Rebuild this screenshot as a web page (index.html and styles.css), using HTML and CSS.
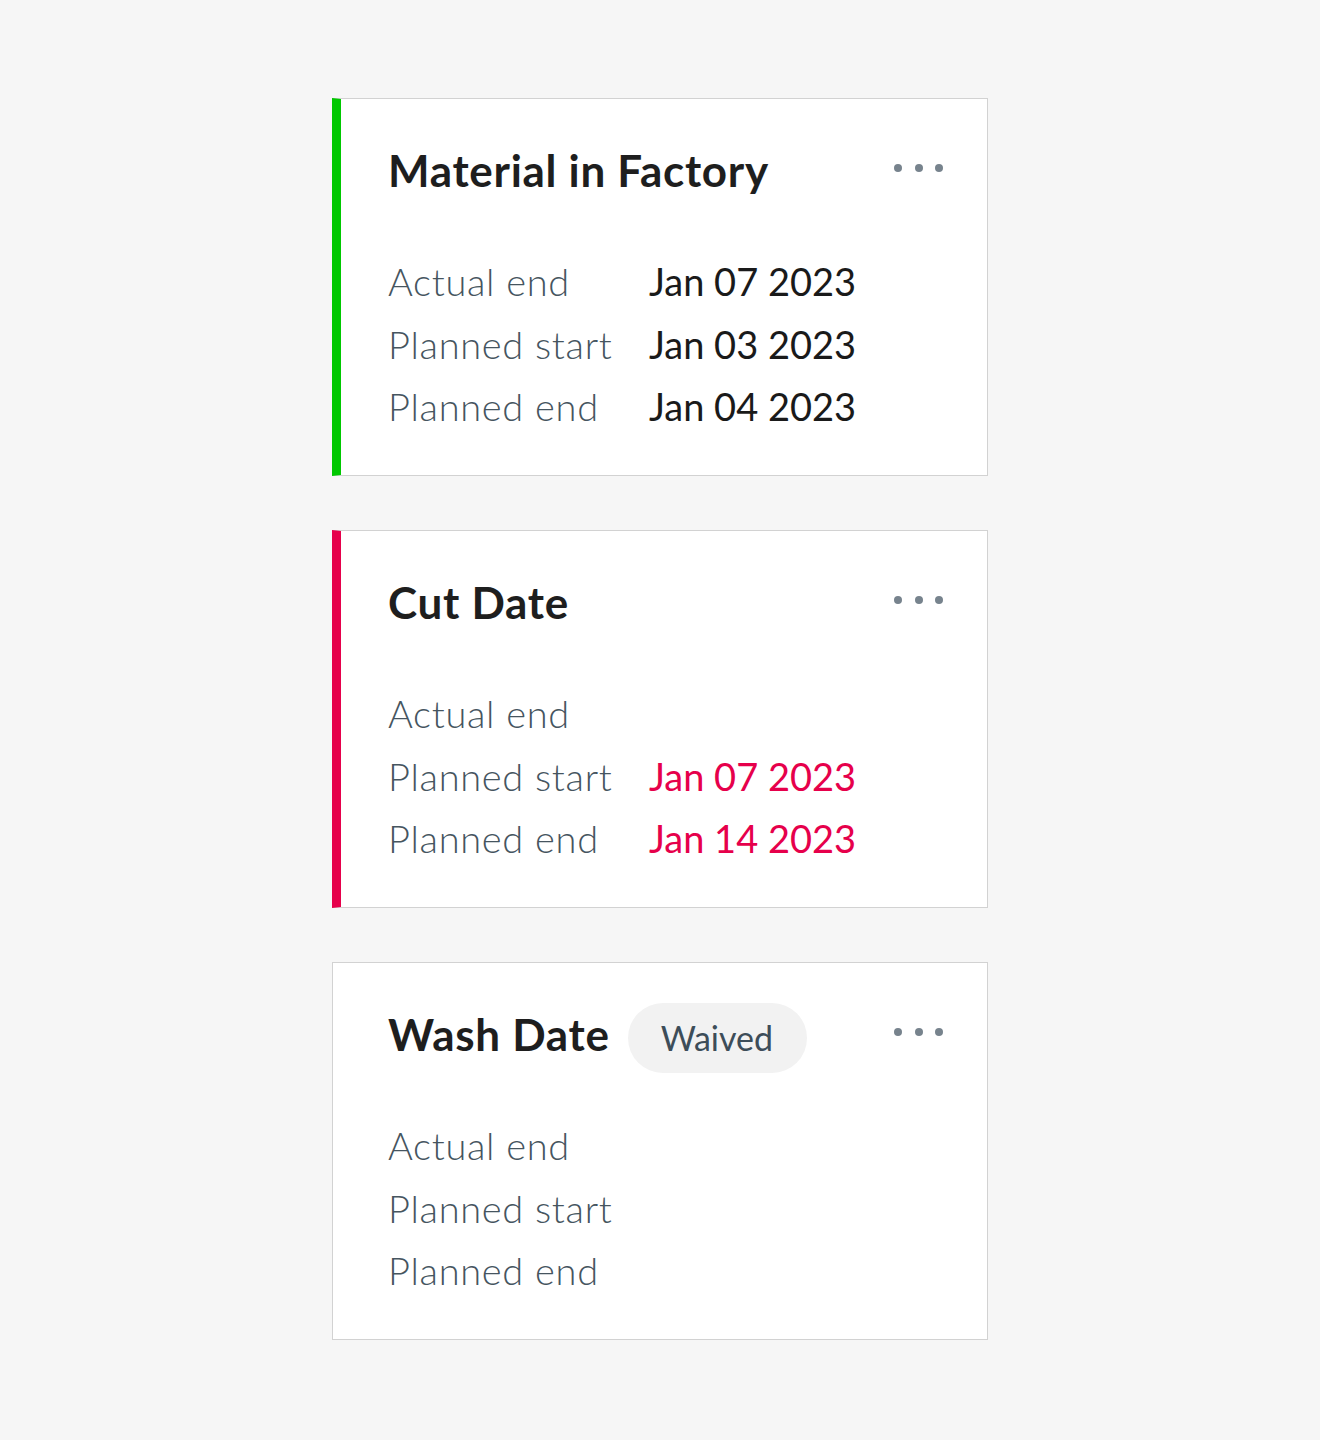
FILE: index.html
```html
<!DOCTYPE html>
<html>
<head>
<meta charset="utf-8">
<link rel="stylesheet" href="styles.css">
</head>
<body>
<main class="list">
  <section class="card card--green">
    <header class="card-head">
      <h2 class="title">Material in Factory</h2>
      <div class="more"><span></span><span></span><span></span></div>
    </header>
    <dl class="rows">
      <dt>Actual end</dt><dd>Jan 07 2023</dd>
      <dt>Planned start</dt><dd>Jan 03 2023</dd>
      <dt>Planned end</dt><dd>Jan 04 2023</dd>
    </dl>
  </section>
  <section class="card card--red">
    <header class="card-head">
      <h2 class="title">Cut Date</h2>
      <div class="more"><span></span><span></span><span></span></div>
    </header>
    <dl class="rows">
      <dt>Actual end</dt><dd></dd>
      <dt>Planned start</dt><dd class="late">Jan 07 2023</dd>
      <dt>Planned end</dt><dd class="late">Jan 14 2023</dd>
    </dl>
  </section>
  <section class="card">
    <header class="card-head">
      <h2 class="title">Wash Date</h2>
      <span class="badge">Waived</span>
      <div class="more"><span></span><span></span><span></span></div>
    </header>
    <dl class="rows">
      <dt>Actual end</dt><dd></dd>
      <dt>Planned start</dt><dd></dd>
      <dt>Planned end</dt><dd></dd>
    </dl>
  </section>
</main>
</body>
</html>
```
FILE: styles.css
```css
* { box-sizing: border-box; }
html, body { margin: 0; padding: 0; }
body {
  background: #f6f6f6;
  font-family: "Lato", "Noto Sans", sans-serif;
}
.list {
  width: 656px;
  margin: 0 auto;
  padding-top: 98px;
  display: flex;
  flex-direction: column;
  gap: 54px;
}
.card {
  background: #fff;
  border: 1px solid #d2d2d2;
  height: 378px;
  padding: 36px 44px 0 55px;
}
.card--green { border-left: 9px solid #00c800; padding-left: 47px; }
.card--red { border-left: 9px solid #e6004b; padding-left: 47px; }
.card-head {
  display: flex;
  align-items: center;
  height: 70px;
}
.title {
  margin: 0;
  font-size: 44px;
  font-weight: 700;
  line-height: 70px;
  color: #1e1e1e;
  letter-spacing: 0.7px;
}
.badge {
  margin-left: 18px;
  height: 70px;
  padding: 0 34px 0 33px;
  border-radius: 35px;
  background: #f2f2f2;
  color: #3d4d59;
  font-size: 34px;
  line-height: 70px;
  margin-top: 8px;
}
.more {
  margin-left: auto;
  align-self: flex-start;
  margin-top: 29px;
  display: flex;
  gap: 12.5px;
}
.more span {
  width: 8px;
  height: 8px;
  border-radius: 50%;
  background: #77838d;
}
.rows {
  margin: 45px 0 0;
  display: grid;
  grid-template-columns: 261px 1fr;
  font-size: 38px;
  line-height: 62.5px;
}
.rows dt { color: #46555f; font-weight: 300; letter-spacing: 0.7px; }
.rows dd { margin: 0; color: #1a1a1a; }
.rows dd.late { color: #e6004b; }
```
